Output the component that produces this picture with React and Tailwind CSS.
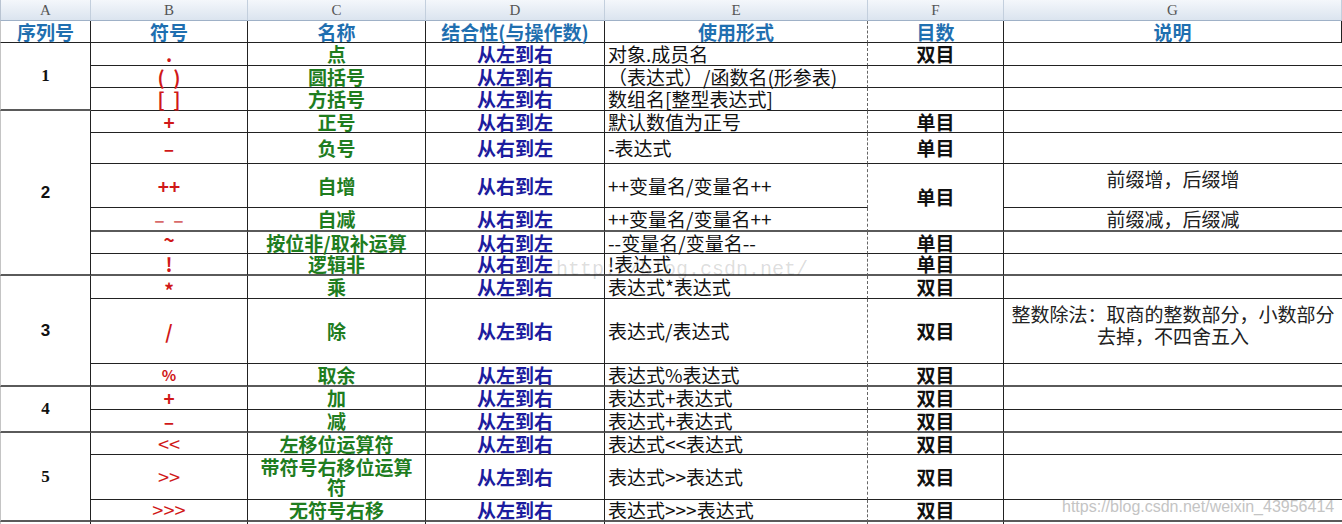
import React from "react";

const CJK = "font-['Noto_Sans_CJK_SC',sans-serif]";

const rows = [
  { h: "h-[23px]", b: ".", c: "点", d: "从左到右", e: "对象.成员名", f: "双目" },
  { h: "h-[22px]", b: "(\u00a0\u00a0)", c: "圆括号", d: "从左到右", e: "（表达式）/函数名(形参表)", f: "" },
  { h: "h-[23px]", b: "[\u00a0\u00a0]", c: "方括号", d: "从左到右", e: "数组名[整型表达式]", f: "" },
  { h: "h-[22px]", b: "+", c: "正号", d: "从右到左", e: "默认数值为正号", f: "单目" },
  { h: "h-[31px]", b: "–", c: "负号", d: "从右到左", e: "-表达式", f: "单目" },
  { h: "h-[44px]", b: "++", c: "自增", d: "从右到左", e: "++变量名/变量名++", f: "单目", fSpan: 2, g: "前缀增，后缀增", gTop: true },
  { h: "h-[23px]", b: "–\u00a0\u00a0–", c: "自减", d: "从右到左", e: "++变量名/变量名++", skipF: true, g: "前缀减，后缀减", thick: true, light: true },
  { h: "h-[22px]", b: "~", c: "按位非/取补运算", d: "从右到左", e: "--变量名/变量名--", f: "单目", raise: true },
  { h: "h-[22px]", b: "!", c: "逻辑非", d: "从右到左", e: "!表达式", f: "单目", thick: true },
  { h: "h-[23px]", b: "*", c: "乘", d: "从左到右", e: "表达式*表达式", f: "双目", lower: true },
  { h: "h-[65px]", b: "/", c: "除", d: "从左到右", e: "表达式/表达式", f: "双目", g: "整数除法：取商的整数部分，小数部分", g2: "去掉，不四舍五入", gTop: true },
  { h: "h-[23px]", b: "%", c: "取余", d: "从左到右", e: "表达式%表达式", f: "双目", thick: true, small: true },
  { h: "h-[23px]", b: "+", c: "加", d: "从左到右", e: "表达式+表达式", f: "双目" },
  { h: "h-[23px]", b: "–", c: "减", d: "从左到右", e: "表达式+表达式", f: "双目", thick: true },
  { h: "h-[22px]", b: "<<", c: "左移位运算符", d: "从左到右", e: "表达式<<表达式", f: "双目", thin: true },
  { h: "h-[45px]", b: ">>", c: "带符号右移位运算", c2: "符", d: "从左到右", e: "表达式>>表达式", f: "双目", thin: true },
  { h: "h-[20px]", b: ">>>", c: "无符号右移", d: "从左到右", e: "表达式>>>表达式", f: "双目", thin: true, thick: true },
];

const groups = { 0: { n: "1", span: 3, serif: true }, 3: { n: "2", span: 6 }, 9: { n: "3", span: 3 }, 12: { n: "4", span: 2, serif: true }, 14: { n: "5", span: 3, serif: true } };

const letters = ["A", "B", "C", "D", "E", "F", "G"];
const heads = ["序列号", "符号", "名称", "结合性(与操作数)", "使用形式", "目数", "说明"];

export default function App() {
  return (
    <div className="relative w-[1342px] h-[524px] overflow-hidden bg-white">
      <table className="table-fixed border-separate border-spacing-0 w-[1342px]">
        <colgroup>
          <col className="w-[91px]" />
          <col className="w-[157px]" />
          <col className="w-[178px]" />
          <col className="w-[179px]" />
          <col className="w-[263px]" />
          <col className="w-[136px]" />
          <col className="w-[338px]" />
        </colgroup>
        <tbody>
          <tr className="h-[21px]">
            {letters.map((l, i) => (
              <td
                key={l}
                className={`p-0 text-center align-middle bg-gradient-to-b from-[#f4f7fb] to-[#dbe4ef] border-b border-b-[#9fb1c7] border-r border-r-[#c3cfdd] ${i === 0 ? "border-l border-l-[#b9c4d2]" : ""} font-['Liberation_Serif',serif] text-[15px] leading-[20px] text-[#555]`}
              >
                {l}
              </td>
            ))}
          </tr>
          <tr className="h-[22px]">
            {heads.map((t, i) => (
              <td
                key={t}
                className={`p-0 text-center align-middle border-b border-b-[#222] border-r ${i === 4 ? "border-r-[#666] [border-right-style:dashed]" : "border-r-[#222]"} ${i === 0 ? "border-l border-l-[#c4c4c4]" : ""} ${CJK} font-bold text-[19px] leading-[20px] text-[#1f6fb0] whitespace-nowrap`}
              >
                {t}
              </td>
            ))}
          </tr>
          {rows.map((r, i) => {
            const g = groups[i];
            const bb = r.thick ? "border-b-2 border-b-[#5a5a5a]" : "border-b border-b-[#222]";
            return (
              <tr key={i} className={r.h}>
                {g && (
                  <td
                    rowSpan={g.span}
                    className={`p-0 text-center align-middle border-l border-l-[#c4c4c4] border-r border-r-[#222] border-b-2 border-b-[#5a5a5a] font-bold text-[17px] text-[#111] ${g.serif ? "font-['Liberation_Serif',serif]" : "font-['Liberation_Sans',sans-serif]"}`}
                  >
                    {g.n}
                  </td>
                )}
                <td className={`p-0 text-center align-middle ${bb} border-r border-r-[#222] ${CJK} ${r.thin ? "font-normal text-[20px]" : r.small ? "font-bold text-[15px]" : "font-bold text-[19px]"} leading-[20px] ${r.light ? "text-[#d86a6a]" : "text-[#d01818]"} whitespace-nowrap`}>
                  <span className={`inline-block ${r.raise ? "-translate-y-[4px]" : ""} ${r.lower ? "translate-y-[3px]" : ""}`}>{r.b}</span>
                </td>
                <td className={`p-0 text-center align-middle ${bb} border-r border-r-[#222] ${CJK} font-bold text-[19px] leading-[20px] text-[#1f7d1f] whitespace-nowrap`}>
                  {r.c}
                  {r.c2 && (
                    <>
                      <br />
                      {r.c2}
                    </>
                  )}
                </td>
                <td className={`p-0 text-center align-middle ${bb} border-r border-r-[#222] ${CJK} font-bold text-[19px] leading-[20px] text-[#1c1c9e] whitespace-nowrap`}>
                  {r.d}
                </td>
                <td className={`p-0 pl-[3px] text-left align-middle ${bb} border-r border-r-[#666] [border-right-style:dashed] ${CJK} font-normal text-[19px] leading-[20px] text-[#111] whitespace-nowrap`}>
                  {r.e}
                </td>
                {!r.skipF && (
                  <td
                    rowSpan={r.fSpan || 1}
                    className={`p-0 text-center align-middle ${r.fSpan ? "border-b-2 border-b-[#5a5a5a]" : bb} border-r border-r-[#222] ${CJK} font-bold text-[19px] leading-[20px] text-[#111] whitespace-nowrap`}
                  >
                    {r.f}
                  </td>
                )}
                <td className={`p-0 text-center ${r.gTop ? "align-top pt-[4px]" : "align-middle"} ${bb} ${CJK} font-normal text-[19px] leading-[22px] text-[#222] whitespace-nowrap`}>
                  {r.g}
                  {r.g2 && (
                    <>
                      <br />
                      {r.g2}
                    </>
                  )}
                </td>
              </tr>
            );
          })}
          <tr className="h-[5px]">
            <td className="p-0 border-l border-l-[#c4c4c4] border-r border-r-[#222]"></td>
            <td className="p-0 border-r border-r-[#222]"></td>
            <td className="p-0 border-r border-r-[#222]"></td>
            <td className="p-0 border-r border-r-[#222]"></td>
            <td className="p-0 border-r border-r-[#666] [border-right-style:dashed]"></td>
            <td className="p-0 border-r border-r-[#222]"></td>
            <td className="p-0"></td>
          </tr>
        </tbody>
      </table>
      <span className="absolute left-[556px] top-[258px] font-['Liberation_Mono',monospace] text-[20px] leading-[24px] text-[#000]/15 whitespace-nowrap pointer-events-none">
        http://blog.csdn.net/
      </span>
      <span className="absolute left-[1062px] top-[497px] font-['Liberation_Sans',sans-serif] text-[16px] leading-[20px] text-[#c4c4c4] whitespace-nowrap pointer-events-none">
        https://blog.csdn.net/weixin_43956414
      </span>
    </div>
  );
}
